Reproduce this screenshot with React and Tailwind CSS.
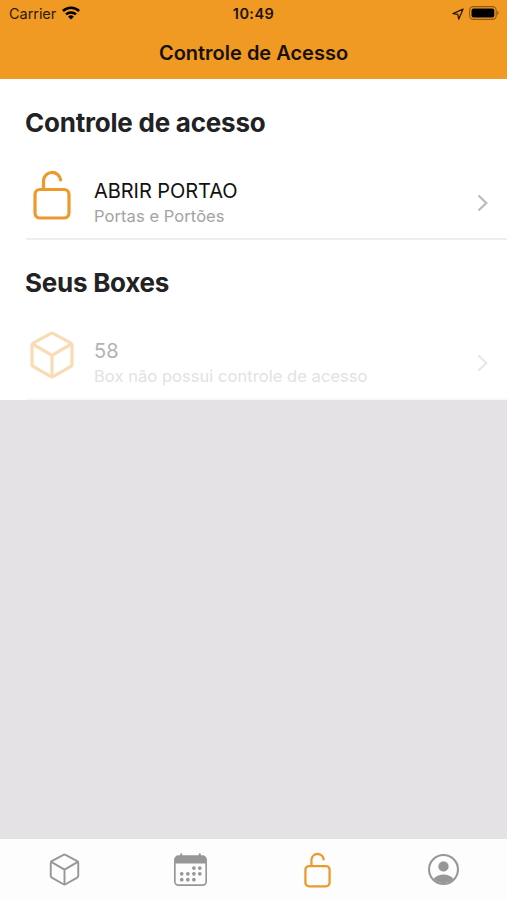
import React from 'react';

const UnlockIcon = ({ className, strokeWidth = 3.2 }) => (
  <svg className={className} viewBox="0 0 38 50" fill="none" stroke="currentColor" strokeWidth={strokeWidth} strokeLinecap="round">
    <rect x="2" y="19.5" width="34" height="28.5" rx="5" />
    <path d="M10.5 19V10.5a8.6 8.6 0 0 1 17.1-.6" />
  </svg>
);

const CubeIcon = ({ className, strokeWidth = 3.2 }) => (
  <svg className={className} viewBox="0 0 44 48" fill="none" stroke="currentColor" strokeWidth={strokeWidth} strokeLinejoin="round">
    <path d="M20.5 2.6Q22 1.8 23.5 2.6L40.5 11.8Q42 12.7 42 14.4V33.2Q42 34.9 40.5 35.700L23.500 45.400Q22 46.200 20.500 45.400L3.500 35.700Q2 34.900 2 33.200V14.400Q2 12.700 3.500 11.800Z" />
    <path d="M2.600 13L22 24.300L41.400 13M22 24.300V46" />
  </svg>
);

const CalendarIcon = ({ className }) => (
  <svg className={className} viewBox="0 0 32 32" fill="none">
    <rect x="0.8" y="3.1" width="30.4" height="28.1" rx="3.5" stroke="currentColor" strokeWidth="1.6" />
    <path d="M1 10.2V6.5A3.5 3.5 0 0 1 4.5 3h23A3.5 3.5 0 0 1 31 6.5v3.7z" fill="currentColor" />
    <path d="M7 1.2v3M25 1.2v3" stroke="currentColor" strokeWidth="2" strokeLinecap="round" />
    <g fill="currentColor">
      <circle cx="19.3" cy="14.6" r="1.8" />
      <circle cx="25" cy="14.6" r="1.8" />
      <circle cx="7.5" cy="20.2" r="1.8" />
      <circle cx="13.4" cy="20.2" r="1.8" />
      <circle cx="19.3" cy="20.2" r="1.8" />
      <circle cx="25" cy="20.2" r="1.8" />
      <circle cx="7.5" cy="25.9" r="1.8" />
      <circle cx="13.4" cy="25.9" r="1.8" />
      <circle cx="19.3" cy="25.9" r="1.8" />
    </g>
  </svg>
);

const ProfileIcon = ({ className }) => (
  <svg className={className} viewBox="0 0 30 30">
    <circle cx="15" cy="15" r="14" fill="none" stroke="currentColor" strokeWidth="2" />
    <circle cx="15" cy="12" r="5" fill="currentColor" />
    <path d="M5.3 24.3C7.5 21.2 11 19.8 15 19.8s7.5 1.4 9.7 4.5A14 14 0 0 1 5.3 24.3z" fill="currentColor" />
  </svg>
);

const WifiIcon = () => (
  <svg className="mb-[2px] ml-[6px] h-[14px] w-[18px]" viewBox="0 0 18 14" fill="none" stroke="#000" strokeWidth="2.5">
    <path d="M.9 5a11.6 11.6 0 0 1 16.2 0" />
    <path d="M4 8.4a7.2 7.2 0 0 1 10 0" />
    <path d="M9 13.6L6.1 10.7a4.2 4.2 0 0 1 5.8 0z" fill="#000" stroke="none" />
  </svg>
);

const LocationIcon = () => (
  <svg className="h-[12px] w-[12px]" viewBox="0 0 12 12" fill="none" stroke="#2b1c07" strokeWidth="1.3" strokeLinejoin="round">
    <path d="M11 1.2L1 5.6l4.8.7.9 4.9z" />
  </svg>
);

const BatteryIcon = () => (
  <svg className="mb-px ml-[5px] h-[14px] w-[30px]" viewBox="0 0 30 14">
    <rect x=".6" y=".6" width="26.6" height="12.8" rx="3.8" fill="none" stroke="#000" strokeOpacity=".42" strokeWidth="1.1" />
    <rect x="2.5" y="2.5" width="22.8" height="9" rx="2" fill="#000" />
    <path d="M28.3 4.8c1.7.7 1.7 3.7 0 4.4z" fill="#000" fillOpacity=".42" />
  </svg>
);

const Chevron = ({ className }) => (
  <svg className={className} viewBox="0 0 12 18" fill="none" stroke="currentColor" strokeWidth="2.3">
    <path d="M1.5 1.5L9.3 9l-7.8 7.5" />
  </svg>
);

const App = () => {
  return (
    <div className="flex h-[900px] w-[507px] flex-col overflow-hidden bg-[#e4e2e5] font-['Inter','Liberation_Sans',sans-serif]">
      <header className="h-[79px] shrink-0 bg-[#f09a24] text-black">
        <div className="grid h-[27px] grid-cols-3 items-center px-[8px]">
          <div className="flex items-center pl-px">
            <span className="text-[14.5px] leading-[27px] tracking-[-0.05px] text-[#2b1c07]">Carrier</span>
            <WifiIcon />
          </div>
          <span className="text-center text-[14.5px] font-semibold leading-[27px] tracking-[0.4px] text-[#1c1204]">10:49</span>
          <div className="flex items-center justify-end">
            <LocationIcon />
            <BatteryIcon />
          </div>
        </div>
        <h1 className="pt-[11px] text-center text-[20px] font-semibold leading-[30px] text-[#171005]">Controle de Acesso</h1>
      </header>

      <main className="shrink-0 bg-white">
        <section className="h-[160px]">
          <h2 className="h-[88px] pl-[25px] pt-[28px] text-[26px] font-bold leading-[32px] tracking-[-0.22px] text-[#222224]">Controle de acesso</h2>
          <div className="ml-[26px] flex h-[73px] border-b-2 border-[#eeeeef] pr-[18px]">
            <UnlockIcon className="ml-[7px] mt-[3px] h-[50px] w-[38px] text-[#ec9a2c]" />
            <div className="ml-[23px] mt-[11px] flex-1">
              <p className="text-[20px] leading-[26px] tracking-[-0.05px] text-[#111]">ABRIR PORTAO</p>
              <p className="text-[16.5px] leading-[25px] tracking-[0.07px] text-[#a3a3a4]">Portas e Portões</p>
            </div>
            <Chevron className="mt-[27px] h-[18px] w-[12px] text-[#bcbcbd]" />
          </div>
        </section>

        <section className="h-[161px]">
          <h2 className="h-[88px] pl-[25px] pt-[28px] text-[26px] font-bold leading-[32px] tracking-[-0.25px] text-[#222224]">Seus Boxes</h2>
          <div className="ml-[26px] flex h-[73px] border-b-2 border-[#f9f9f9] pr-[18px]">
            <CubeIcon className="ml-[4px] mt-[4px] h-[48px] w-[44px] text-[#f9dcb5]" />
            <div className="ml-[20px] mt-[11px] flex-1">
              <p className="text-[20px] leading-[26px] text-[#b2b2b3]">58</p>
              <p className="text-[16.5px] leading-[25px] tracking-[0.05px] text-[#e2e2e3]">Box não possui controle de acesso</p>
            </div>
            <Chevron className="mt-[27px] h-[18px] w-[12px] text-[#e8e8e9]" />
          </div>
        </section>
      </main>

      <nav className="mt-auto grid h-[61px] shrink-0 grid-cols-4 justify-items-center bg-[#fdfdfd] pl-px text-[#979797]">
        <CubeIcon className="mt-[14px] h-[33px] w-[31px]" strokeWidth={2.8} />
        <CalendarIcon className="mt-[14px] h-[33px] w-[33px]" />
        <UnlockIcon className="mt-[13px] h-[36px] w-[27px] text-[#ec9a2c]" />
        <ProfileIcon className="mt-[15px] h-[31px] w-[31px]" />
      </nav>
    </div>
  );
};

export default App;
